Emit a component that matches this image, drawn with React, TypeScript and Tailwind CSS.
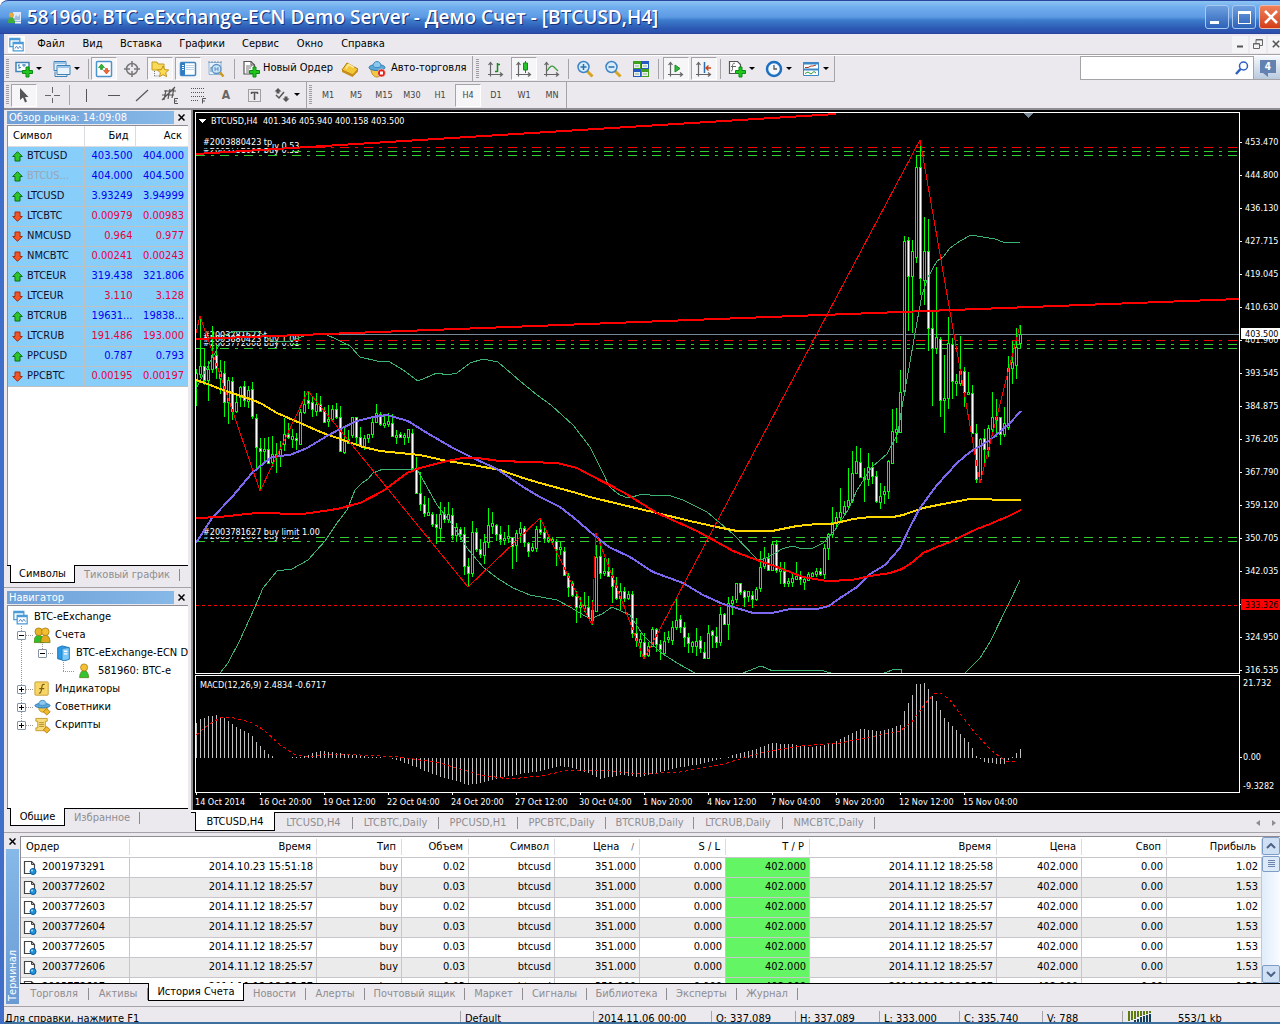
import type { ReactNode } from 'react';

const quotes: Array<{ symbol: string; bid: string; ask: string; up: boolean; muted?: boolean }> = [
  { symbol: 'BTCUSD', bid: '403.500', ask: '404.000', up: true },
  { symbol: 'BTCUS...', bid: '404.000', ask: '404.500', up: true, muted: true },
  { symbol: 'LTCUSD', bid: '3.93249', ask: '3.94999', up: true },
  { symbol: 'LTCBTC', bid: '0.00979', ask: '0.00983', up: false },
  { symbol: 'NMCUSD', bid: '0.964', ask: '0.977', up: false },
  { symbol: 'NMCBTC', bid: '0.00241', ask: '0.00243', up: false },
  { symbol: 'BTCEUR', bid: '319.438', ask: '321.806', up: true },
  { symbol: 'LTCEUR', bid: '3.110', ask: '3.128', up: false },
  { symbol: 'BTCRUB', bid: '19631...', ask: '19838...', up: true },
  { symbol: 'LTCRUB', bid: '191.486', ask: '193.000', up: false },
  { symbol: 'PPCUSD', bid: '0.787', ask: '0.793', up: true },
  { symbol: 'PPCBTC', bid: '0.00195', ask: '0.00197', up: false },
];

const orders = [
  { id: '2001973291', open: '2014.10.23 15:51:18', volume: '0.02', close: '2014.11.12 18:25:58', profit: '1.02' },
  { id: '2003772602', open: '2014.11.12 18:25:57', volume: '0.03', close: '2014.11.12 18:25:57', profit: '1.53' },
  { id: '2003772603', open: '2014.11.12 18:25:57', volume: '0.02', close: '2014.11.12 18:25:57', profit: '1.02' },
  { id: '2003772604', open: '2014.11.12 18:25:57', volume: '0.03', close: '2014.11.12 18:25:57', profit: '1.53' },
  { id: '2003772605', open: '2014.11.12 18:25:57', volume: '0.03', close: '2014.11.12 18:25:57', profit: '1.53' },
  { id: '2003772606', open: '2014.11.12 18:25:57', volume: '0.03', close: '2014.11.12 18:25:57', profit: '1.53' },
  { id: '2003772607', open: '2014.11.12 18:25:57', volume: '0.03', close: '2014.11.12 18:25:57', profit: '1.53' },
];

const orderColumns = [
  { label: 'Ордер', width: 'w-[109px]' },
  { label: 'Время', width: 'w-[187px]' },
  { label: 'Тип', width: 'w-[85px]' },
  { label: 'Объем', width: 'w-[67px]' },
  { label: 'Символ', width: 'w-[86px]' },
  { label: 'Цена', width: 'w-[85px]', sorted: true },
  { label: 'S / L', width: 'w-[86px]' },
  { label: 'T / P', width: 'w-[84px]' },
  { label: 'Время', width: 'w-[187px]' },
  { label: 'Цена', width: 'w-[85px]' },
  { label: 'Своп', width: 'w-[85px]' },
  { label: 'Прибыль', width: 'w-[95px]' },
];

const terminalTabs = [
  { label: 'Торговля', width: 'w-[69px]' },
  { label: 'Активы', width: 'w-[59px]' },
  { label: 'История Счета', width: 'w-[96px]', active: true },
  { label: 'Новости', width: 'w-[62px]' },
  { label: 'Алерты', width: 'w-[59px]' },
  { label: 'Почтовый ящик', width: 'w-[100px]' },
  { label: 'Маркет', width: 'w-[58px]' },
  { label: 'Сигналы', width: 'w-[64px]' },
  { label: 'Библиотека', width: 'w-[80px]' },
  { label: 'Эксперты', width: 'w-[70px]' },
  { label: 'Журнал', width: 'w-[61px]' },
];

const chartTabs = [
  { label: 'BTCUSD,H4', width: 'w-[80px]', active: true },
  { label: 'LTCUSD,H4', width: 'w-[78px]' },
  { label: 'LTCBTC,Daily', width: 'w-[86px]' },
  { label: 'PPCUSD,H1', width: 'w-[79px]' },
  { label: 'PPCBTC,Daily', width: 'w-[88px]' },
  { label: 'BTCRUB,Daily', width: 'w-[88px]' },
  { label: 'LTCRUB,Daily', width: 'w-[89px]' },
  { label: 'NMCBTC,Daily', width: 'w-[92px]' },
];

const timeframes = ['M1', 'M5', 'M15', 'M30', 'H1', 'H4', 'D1', 'W1', 'MN'];

const menu = [
  { label: 'Файл', width: 'w-[38px]' },
  { label: 'Вид', width: 'w-[45px]' },
  { label: 'Вставка', width: 'w-[52px]' },
  { label: 'Графики', width: 'w-[70px]' },
  { label: 'Сервис', width: 'w-[47px]' },
  { label: 'Окно', width: 'w-[52px]' },
  { label: 'Справка', width: 'w-[54px]' },
];

// high, body top, body bottom, low, 1 = falling; one candle every 4px
const candles: number[][] = [
  [369, 373, 380, 406], [316, 366, 374, 378], [348, 366, 380, 385, 1], [361, 369, 380, 401], [326, 355, 369, 373],
  [345, 355, 368, 379, 1], [360, 371, 378, 394], [361, 373, 402, 417, 1], [377, 380, 402, 424], [377, 381, 411, 420, 1],
  [394, 402, 411, 413], [386, 387, 397, 407], [381, 386, 400, 407, 1], [386, 390, 401, 408], [382, 389, 416, 419, 1],
  [414, 418, 447, 468, 1], [438, 448, 451, 491, 1], [438, 449, 451, 462], [437, 449, 463, 463, 1], [436, 454, 462, 467],
  [443, 454, 456, 473], [441, 449, 456, 467], [418, 434, 444, 451], [423, 434, 437, 439, 1], [429, 436, 439, 448],
  [433, 438, 440, 450, 1], [409, 412, 444, 444], [391, 404, 412, 414], [392, 400, 403, 409, 1], [397, 402, 409, 417, 1],
  [393, 404, 411, 416], [396, 404, 411, 412, 1], [407, 411, 422, 422, 1], [405, 419, 421, 427], [405, 409, 419, 420],
  [403, 409, 417, 419, 1], [406, 417, 451, 452, 1], [427, 441, 452, 454], [430, 439, 443, 443], [417, 417, 435, 438],
  [417, 417, 437, 445, 1], [427, 437, 445, 447, 1], [435, 438, 446, 450], [434, 434, 438, 443], [417, 422, 434, 438],
  [404, 413, 422, 423], [412, 414, 424, 426, 1], [416, 423, 425, 428], [413, 421, 424, 427], [414, 423, 436, 437, 1],
  [430, 435, 437, 444], [432, 434, 437, 437, 1], [433, 435, 437, 445], [429, 429, 437, 443], [429, 433, 468, 469, 1],
  [457, 468, 493, 494, 1], [472, 493, 504, 511, 1], [496, 504, 513, 517, 1], [498, 512, 515, 516], [512, 514, 524, 527, 1],
  [514, 524, 527, 544, 1], [502, 514, 528, 541], [507, 514, 519, 523, 1], [502, 514, 519, 523], [508, 515, 535, 540, 1],
  [523, 527, 535, 542], [527, 529, 534, 540, 1], [527, 534, 566, 575, 1], [558, 566, 573, 587, 1], [521, 532, 573, 577],
  [528, 532, 549, 552, 1], [539, 549, 554, 558, 1], [534, 542, 555, 564], [508, 525, 542, 548], [512, 523, 526, 534],
  [524, 525, 534, 541, 1], [526, 534, 539, 545, 1], [532, 538, 540, 545], [525, 536, 538, 543], [537, 537, 546, 569, 1],
  [530, 533, 545, 562], [522, 528, 533, 543], [526, 528, 542, 547, 1], [542, 543, 551, 557, 1], [543, 547, 550, 552],
  [526, 529, 548, 552], [518, 529, 532, 535, 1], [528, 532, 538, 543, 1], [535, 538, 540, 543], [537, 539, 541, 544],
  [539, 541, 549, 566, 1], [542, 547, 549, 555], [547, 551, 575, 576, 1], [573, 576, 587, 597, 1], [581, 583, 595, 597, 1],
  [591, 596, 607, 623, 1], [597, 605, 607, 618], [592, 605, 608, 612], [596, 607, 617, 618, 1], [600, 610, 620, 625],
  [545, 557, 611, 612], [540, 556, 573, 579, 1], [558, 571, 573, 576], [558, 571, 576, 577, 1], [568, 576, 586, 603, 1],
  [577, 586, 598, 600, 1], [583, 591, 598, 611], [587, 591, 598, 602, 1], [591, 594, 598, 600], [591, 594, 633, 638, 1],
  [618, 633, 640, 647, 1], [633, 639, 642, 657], [633, 642, 655, 659, 1], [642, 646, 655, 657], [627, 629, 646, 646],
  [628, 629, 644, 652, 1], [640, 644, 649, 660, 1], [632, 641, 653, 653], [631, 637, 639, 643], [621, 627, 640, 645],
  [598, 620, 627, 630], [615, 619, 627, 633, 1], [622, 627, 637, 647, 1], [633, 637, 643, 653, 1], [641, 642, 646, 653],
  [628, 641, 646, 656], [636, 640, 648, 653, 1], [642, 652, 658, 659, 1], [625, 633, 658, 659], [630, 631, 635, 648, 1],
  [627, 636, 642, 648, 1], [607, 614, 642, 646], [613, 614, 624, 624, 1], [597, 603, 624, 640], [596, 600, 603, 615],
  [583, 583, 599, 603], [583, 583, 592, 595, 1], [590, 591, 597, 607, 1], [591, 591, 596, 602], [591, 595, 599, 608, 1],
  [587, 589, 599, 601], [551, 567, 588, 592], [547, 558, 566, 569], [553, 558, 570, 571, 1], [541, 544, 570, 571],
  [540, 544, 570, 573, 1], [562, 569, 571, 584], [562, 571, 583, 587, 1], [578, 581, 583, 587], [572, 578, 582, 587],
  [562, 576, 579, 580], [571, 576, 579, 585, 1], [577, 579, 582, 590], [572, 574, 580, 581], [572, 573, 576, 577],
  [568, 571, 574, 577], [568, 571, 574, 576, 1], [544, 548, 574, 579], [533, 534, 548, 560], [507, 522, 534, 538],
  [512, 517, 523, 529], [488, 512, 517, 523], [501, 506, 513, 514], [468, 500, 506, 510], [451, 473, 500, 503],
  [446, 461, 473, 474], [448, 462, 477, 477, 1], [468, 477, 479, 502], [453, 467, 479, 486], [462, 467, 476, 484, 1],
  [471, 476, 501, 503, 1], [483, 496, 502, 509], [486, 491, 494, 504], [460, 461, 491, 499], [409, 431, 463, 463],
  [408, 429, 432, 443], [370, 392, 432, 433], [236, 241, 391, 392], [237, 240, 276, 331, 1], [240, 251, 276, 333],
  [155, 167, 257, 263], [141, 167, 278, 295, 1], [217, 251, 280, 305], [219, 251, 328, 351, 1], [310, 328, 348, 406, 1],
  [267, 337, 348, 354], [337, 339, 400, 417, 1], [355, 398, 400, 433], [317, 343, 398, 409], [338, 344, 381, 399, 1],
  [374, 381, 383, 396], [336, 371, 383, 386], [367, 371, 392, 407, 1], [372, 392, 394, 394], [385, 393, 433, 433, 1],
  [424, 433, 479, 483, 1], [438, 439, 479, 482], [429, 438, 449, 465, 1], [425, 428, 449, 457], [392, 417, 429, 435],
  [399, 417, 420, 437], [417, 417, 434, 445, 1], [407, 423, 434, 437], [356, 368, 427, 430], [341, 362, 368, 384],
  [328, 347, 365, 379], [325, 334, 343, 348],
];

const upperBand = '196,389 212,358 225,335 235,331 257,331 273,341 290,341 307,335 325,334 338,340 350,346 360,357 377,361 390,362 403,370 418,381 437,373 448,375 457,373 470,363 483,359 498,362 520,381 537,395 551,405 573,425 590,447 603,473 609,486 612,489 620,495 628,498 643,494 657,496 668,495 683,500 707,512 733,534 757,559 762,560 772,555 782,549 792,546 803,549 813,548 823,543 835,530 848,510 857,490 872,467 887,454 898,433 902,407 910,362 917,322 922,295 928,277 937,261 943,257 950,248 960,241 971,235 983,237 995,239 1003,242 1020,242';
const lowerBands = [
  '220,673 228,663 240,640 255,607 263,588 277,571 292,569 308,560 325,541 337,523 347,510 355,490 362,483 368,479 373,473 383,469 400,470 417,469 437,505 453,525 467,548 483,567 497,578 513,588 530,595 557,600 570,607 590,619 602,614 612,607 630,615 643,635 660,652 677,663 695,673',
  '743,673 761,666 773,671 793,670 820,670 831,673',
  '884,673 895,669 901,669 902,673',
  '965,673 980,658 990,642 1009,603 1020,580',
];
const slowAverage = '196,380 205,383 223,390 253,400 262,404 277,413 300,423 323,433 343,440 363,447 380,451 420,455 447,461 473,465 500,470 523,478 540,483 573,492 590,497 623,505 657,513 690,521 717,527 737,531 772,531 797,526 817,524 832,524 853,519 870,517 893,517 903,515 923,508 943,504 970,499 987,499 997,500 1021,500';
const fastAverage = '196,543 212,518 232,497 252,473 270,458 278,456 290,455 307,448 327,436 340,429 357,421 373,417 387,415 408,421 427,433 453,448 473,458 497,469 523,487 540,497 560,507 573,517 595,536 609,547 630,557 653,572 683,583 703,595 723,604 740,609 753,613 772,613 790,609 817,609 829,606 840,598 857,587 870,574 885,565 900,548 910,527 920,508 937,485 957,463 970,452 990,440 1009,424 1021,411';
const redAverage = '196,518 220,517 237,515 257,513 303,514 337,509 360,503 383,491 407,473 420,468 447,461 463,458 477,458 500,461 557,463 577,468 590,475 623,492 657,513 697,531 717,542 733,551 757,560 777,567 803,577 827,581 852,580 870,576 890,573 902,569 913,562 923,553 937,547 950,542 960,537 977,529 990,524 1009,516 1021,510';
const zigzag = '196,333 200,316 260,491 308,391 468,587 540,518 592,625 596,533 644,659 920,140 980,483 1020,325';

const histogramKeys = [
  [196, 723], [200, 719], [208, 716], [216, 715], [224, 718], [232, 724], [240, 729], [248, 733], [252, 736], [256, 742], [264, 750],
  [268, 754], [276, 758], [300, 757], [320, 751], [340, 753], [360, 756], [388, 758], [400, 761], [420, 769], [440, 777], [460, 782],
  [468, 785], [480, 783], [500, 778], [520, 774], [540, 771], [560, 766], [572, 768], [590, 774], [600, 779], [620, 775],
  [640, 777], [650, 774], [670, 769], [700, 764], [720, 759], [740, 753], [756, 749], [770, 743], [790, 744], [810, 747],
  [830, 744], [845, 736], [860, 729], [880, 731], [888, 729], [900, 725], [904, 711], [908, 703], [912, 695], [916, 684],
  [924, 683], [928, 689], [932, 696], [936, 701], [940, 710], [944, 718], [952, 726], [964, 738], [968, 742], [972, 748],
  [976, 756], [984, 762], [1000, 764], [1004, 764], [1008, 760], [1012, 757], [1016, 753], [1020, 749],
];
const signal = '196,735 208,725 220,718 230,717 250,722 264,730 280,745 294,754 310,757 330,754 360,755 400,757 440,763 480,775 510,779 540,776 570,770 600,770 640,774 680,772 720,765 760,753 800,746 840,743 870,737 900,731 912,722 924,705 934,694 941,693 950,700 961,715 975,733 992,751 1003,759 1008,762 1018,761';

const prices = ['453.470', '444.800', '436.130', '427.715', '419.045', '410.630', '401.960', '393.545', '384.875', '376.205', '367.790', '359.120', '350.705', '342.035', '', '324.950', '316.535'];
const dates = ['14 Oct 2014', '16 Oct 20:00', '19 Oct 12:00', '22 Oct 04:00', '24 Oct 20:00', '27 Oct 12:00', '30 Oct 04:00', '1 Nov 20:00', '4 Nov 12:00', '7 Nov 04:00', '9 Nov 20:00', '12 Nov 12:00', '15 Nov 04:00'];

function histogramAt(x: number) {
  const i = Math.max(1, histogramKeys.findIndex(([kx]) => kx >= x));
  const [x0, y0] = histogramKeys[i - 1];
  const [x1, y1] = histogramKeys[i];
  return Math.round(y0 + ((y1 - y0) * (x - x0)) / (x1 - x0));
}

function Icon({ children, size = 18 }: { children: ReactNode; size?: number }) {
  return (
    <svg width={size} height={size} viewBox="0 0 18 18" fill="none" className="shrink-0" aria-hidden>
      {children}
    </svg>
  );
}

const plus = <path d="M11 7h3v3.500h3.500v3h-3.500v3.500h-3v-3.500h-3.500v-3h3.500z" fill="#22c51d" stroke="#0b8a12" />;
const axes = <path d="M3.500 2.500v14M1 14.500h14M1.500 5l2-2.500 2 2.500M13 12.500l2.500 2-2.500 2" stroke="#666" strokeWidth="1.200" />;

const icons = {
  newChart: (
    <Icon>
      <path d="M1 2.500h13v9H1z" fill="#fff" stroke="#3d82b8" strokeWidth="1.500" />
      <path d="M4 4v5M3 5.500h1M4 7.500h2M7 5h4M9 4v3" stroke="#3d82b8" />
      {plus}
    </Icon>
  ),
  profiles: (
    <Icon>
      <path d="M1 1.500h12v9H1z" fill="#e3effa" stroke="#3d82b8" />
      <path d="M4 5.500h13v9H4z" fill="#e9f3fc" stroke="#3d82b8" />
      <path d="M1.500 3h11M4.500 7h12" stroke="#9cc4e6" strokeWidth="2" />
      <path d="M2 11.500v5h12v-2" stroke="#3d82b8" />
    </Icon>
  ),
  market: (
    <Icon>
      <rect x="1.500" y="1.500" width="15" height="15" rx="1" fill="#fff" stroke="#4b93cc" strokeWidth="1.500" />
      <path d="M6.500 4l3 3.500h-2v2h-2v-2h-2z" fill="#2fb72a" stroke="#138a13" strokeWidth=".6" />
      <path d="M11.500 14l3-3.500h-2v-2h-2v2h-2z" fill="#f0693a" stroke="#c43a12" strokeWidth=".6" />
    </Icon>
  ),
  target: (
    <Icon>
      <circle cx="9" cy="9" r="5.500" stroke="#777" strokeWidth="1.500" />
      <path d="M9 1v6M9 11v6M1 9h6M11 9h6" stroke="#777" strokeWidth="1.500" />
    </Icon>
  ),
  navigator: (
    <Icon>
      <path d="M1 2h5l1 2h6v6H1z" fill="#f8d95a" stroke="#c49a1c" />
      <path d="M3.500 11v6M3.500 16h5" stroke="#777" strokeDasharray="1 1" />
      <path d="M12 6l1.700 3.600 4 .4-3 2.700.9 4-3.600-2.100-3.500 2.100.9-4-3-2.700 4-.4z" fill="#fbdc4e" stroke="#c4921c" />
    </Icon>
  ),
  terminal: (
    <Icon>
      <rect x="1.500" y="2.500" width="15" height="13" rx="1" fill="#fff" stroke="#3f88c8" strokeWidth="1.500" />
      <path d="M2 3h4v12H2z" fill="#2f7cc4" />
      <path d="M7 5.500h8M7 7.500h8M7 9.500h8" stroke="#bcd3ea" />
      <path d="M3 5.500h2M3 7.500h2M3 9.500h2" stroke="#fff" />
    </Icon>
  ),
  tester: (
    <Icon>
      <path d="M2 2.500h12v12H2z" fill="#e6f1fb" stroke="#8fb4d6" />
      <path d="M2 1v2M5 1v2M8 1v2M11 1v2M14 1v2M4 12V7l2 2 2-4" stroke="#7793ad" />
      <circle cx="9.500" cy="9" r="4.500" fill="#cfe6fa" stroke="#5d92c4" strokeWidth="1.300" />
      <path d="M8 7v4M11 7v4M8 9h3" stroke="#5d92c4" />
      <path d="M13 12.500l3.500 4" stroke="#c99a1c" strokeWidth="2.500" />
    </Icon>
  ),
  newOrder: (
    <Icon>
      <path d="M2 1.500h7l3.500 3.500v9H2z" fill="#fff" stroke="#555" strokeWidth="1.200" />
      <path d="M9 1.500V5h3.500" stroke="#555" />
      <path d="M4 6h6M4 8h5M4 10h3M4 12h3" stroke="#777" />
      {plus}
    </Icon>
  ),
  gold: (
    <Icon>
      <path d="M1 10l5-7 11 6-5 6z" fill="#f4c736" stroke="#b07a12" />
      <path d="M1 10l10.500 5L17 9v2.500L11.500 17 1 12z" fill="#c98d1a" />
      <path d="M5 8.500l2.500-4L13 7.500" stroke="#fdeaa0" strokeWidth="1.500" />
    </Icon>
  ),
  expert: (
    <Icon>
      <path d="M3 9c0 5 3 8 6 8s6-3 6-8z" fill="#f2c744" stroke="#c4921c" />
      <ellipse cx="9" cy="7.500" rx="8" ry="3" fill="#5ca9dc" stroke="#3179ae" />
      <path d="M5 6.500c0-3 1.500-5 4-5s4 2 4 5c-2 1.500-6 1.500-8 0z" fill="#8bc8ee" stroke="#3f8cc2" />
      <circle cx="13.500" cy="13" r="4" fill="#e2231a" stroke="#fff" strokeWidth=".5" />
      <path d="M12 11.500h3v3h-3z" fill="#fff" />
    </Icon>
  ),
  bars: (
    <Icon>
      {axes}
      <path d="M10.500 3v9M8 11.500h2.500M10.500 4.500H13" stroke="#178a1c" strokeWidth="1.500" />
    </Icon>
  ),
  candle: (
    <Icon>
      {axes}
      <path d="M10.500 1v12" stroke="#178a1c" />
      <path d="M8.500 3h4v7h-4z" fill="#25c52a" stroke="#178a1c" />
    </Icon>
  ),
  line: (
    <Icon>
      {axes}
      <path d="M4 11c3-5 5-6 7-4s3 3 4 4" stroke="#3f9c42" strokeWidth="1.300" />
    </Icon>
  ),
  zoomIn: (
    <Icon>
      <path d="M11 11l5.500 5.500" stroke="#d9a520" strokeWidth="3" />
      <circle cx="7.500" cy="7" r="5.500" fill="#d9ecfb" stroke="#3b85c6" strokeWidth="1.500" />
      <path d="M4.500 7h6M7.500 4v6" stroke="#2b6fae" strokeWidth="1.500" />
    </Icon>
  ),
  zoomOut: (
    <Icon>
      <path d="M11 11l5.500 5.500" stroke="#d9a520" strokeWidth="3" />
      <circle cx="7.500" cy="7" r="5.500" fill="#d9ecfb" stroke="#3b85c6" strokeWidth="1.500" />
      <path d="M4.500 7h6" stroke="#2b6fae" strokeWidth="1.500" />
    </Icon>
  ),
  tiles: (
    <Icon>
      <path d="M1 1h8v8H1zM9 9h8v8H9z" fill="#3f9e1c" />
      <path d="M9 1h8v8H9zM1 9h8v8H1z" fill="#2558c4" />
      <path d="M2 4h6v4H2zM10 4h6v4h-6zM2 12h6v4H2zM10 12h6v4h-6z" fill="#e9f2ea" />
      <path d="M3 6h4M11 6h4M3 14h4M11 14h4" stroke="#8fae9a" />
    </Icon>
  ),
  scroll: (
    <Icon>
      {axes}
      <path d="M8 5l5 3.500L8 12z" fill="#35b93a" stroke="#178a1c" />
    </Icon>
  ),
  shift: (
    <Icon>
      {axes}
      <path d="M9.500 2v11" stroke="#2a6fb0" strokeWidth="1.500" />
      <path d="M11 8h5M13.500 5.500L11 8l2.500 2.500" stroke="#c8401a" strokeWidth="1.300" />
    </Icon>
  ),
  indicators: (
    <Icon>
      <path d="M1.500 1.500h8l3 3v9h-11z" fill="#fff" stroke="#555" strokeWidth="1.200" />
      <path d="M7 3.500c-2-1-2.500 1-2.500 3.500s0 4-1.500 4M3 6.500h5" stroke="#666" />
      {plus}
    </Icon>
  ),
  clock: (
    <Icon>
      <circle cx="9" cy="9" r="7" fill="#f2f8fe" stroke="#1f6fc0" strokeWidth="2.500" />
      <path d="M9 5v4h3" stroke="#555" strokeWidth="1.300" />
    </Icon>
  ),
  template: (
    <Icon>
      <path d="M1.500 2.500h15v13h-15z" fill="#fff" stroke="#3f88c8" />
      <path d="M1 3.500h16M1 9.500h16" stroke="#3f88c8" strokeWidth="2" />
      <path d="M3 7.500h3l3-1.500h2l3-1" stroke="#a33c22" />
      <path d="M3 13.500l3-1.500 3 2 3-2.500 2 1.500" stroke="#2f9a33" />
    </Icon>
  ),
  cursor: (
    <Icon>
      <path d="M5 2v12l3-2.500 2 5 2-1-2-4.500h3.500z" fill="#555" />
    </Icon>
  ),
  cross: (
    <Icon>
      <path d="M9.500 1v6M9.500 12v5M2 9.500h6M11 9.500h6" stroke="#666" />
    </Icon>
  ),
  vertical: (
    <Icon>
      <path d="M9.500 3v13" stroke="#555" />
    </Icon>
  ),
  horizontal: (
    <Icon>
      <path d="M3 9.500h12" stroke="#555" />
    </Icon>
  ),
  trend: (
    <Icon>
      <path d="M3 15L15 4" stroke="#555" strokeWidth="1.200" />
    </Icon>
  ),
  channel: (
    <Icon>
      <path d="M1 14L14 1M1 9h12M3 5h12M5 4L3 14M9 3L7 13M13 2l-2 10" stroke="#555" strokeWidth="1.200" />
      <path d="M17 12.500h-3.500v5H17M13.500 15H16" stroke="#555" />
    </Icon>
  ),
  fibo: (
    <Icon>
      <path d="M2 2.500h13M2 6.500h13M2 10.500h13M2 14.500h8" stroke="#555" strokeDasharray="1 1" />
      <path d="M17 12.500h-3.500v5M13.500 15H16" stroke="#555" />
    </Icon>
  ),
  label: (
    <Icon>
      <rect x="3.500" y="3.500" width="12" height="12" stroke="#555" strokeDasharray="1 1" />
      <path d="M6 6.500h7M9.500 6v8M6.500 6v2M12.500 6v2" stroke="#555" strokeWidth="1.500" />
    </Icon>
  ),
  arrows: (
    <Icon>
      <path d="M5 2l3.500 3.500H6.500v2h-3v-2h-2z" fill="#555" />
      <path d="M3 9l3 3 5-6" stroke="#555" strokeWidth="1.500" />
      <path d="M13 16l-3.500-3.500h2v-2h3v2h2z" fill="#555" />
    </Icon>
  ),
  chart: (
    <Icon size={15}>
      <path d="M1 1.500h12v10H1z" fill="#f4faff" stroke="#4a9bd8" strokeWidth="1.500" />
      <path d="M5 6.500h12v10H5z" fill="#fff" stroke="#4a9bd8" strokeWidth="1.500" />
      <path d="M1 3h12M5 8h12" stroke="#4a9bd8" strokeWidth="1.500" />
      <path d="M7 14l2-3 2 3 2-3 2 3" stroke="#3c79c8" />
    </Icon>
  ),
};

const person = (x: number, head: string, body: string) => (
  <g>
    <path d={`M${x} 16.500c0-5 2-8 5-8s5 3 5 8z`} fill={body} stroke="#5a7a10" strokeWidth=".8" />
    <circle cx={x + 5} cy="5" r="4" fill={head} stroke="#a8740a" strokeWidth=".8" />
  </g>
);

function Dropdown() {
  return (
    <svg width="6" height="4" viewBox="0 0 6 4" aria-hidden>
      <path d="M0 0h6L3 3z" fill="#000" />
    </svg>
  );
}

function Grip({ width = 'w-2' }: { width?: string }) {
  return (
    <div className={`flex shrink-0 items-center justify-center self-stretch ${width}`}>
      <div className="h-5 w-[3px] bg-[repeating-linear-gradient(#9d9ba0_0px,#9d9ba0_1px,#ebe9ed_1px,#ebe9ed_2px)]" />
    </div>
  );
}

function Separator({ width }: { width: string }) {
  return (
    <div className={`flex shrink-0 justify-center ${width}`}>
      <div className="h-5 w-px bg-[#a5a3a8]" />
    </div>
  );
}

function Tool({ label, pressed, children }: { label: string; pressed?: boolean; children: ReactNode }) {
  return (
    <button
      aria-label={label}
      className={`mx-px flex h-[23px] w-[26px] shrink-0 items-center justify-center border ${pressed ? 'border-t-[#a5a3a8] border-l-[#a5a3a8] border-r-white border-b-white bg-[#f6f5f7]' : 'border-transparent'}`}
    >
      {children}
    </button>
  );
}

function MenuTool({ label, width, children }: { label: string; width: string; children: ReactNode }) {
  return (
    <button aria-label={label} className={`flex h-6 shrink-0 items-center gap-[3px] pl-[5px] ${width}`}>
      {children}
      <Dropdown />
    </button>
  );
}

function TitleBar() {
  return (
    <header className="flex h-[34px] shrink-0 items-center overflow-hidden rounded-tl-lg border-t border-b border-[#2a45a0] bg-[linear-gradient(#8cc4f2_0%,#6fadee_20%,#5d9ae4_50%,#3c7ccc_60%,#2c5ab4_85%,#2a4fac_100%)] pl-2">
      <svg width="13" height="13" viewBox="0 0 13 13" aria-hidden>
        <path d="M5 1h8v9H5z" fill="#dceafa" />
        <path d="M6 8l2-4 2 2 2-3v6H6z" fill="#9dbbe0" />
        <path d="M0 12c0-4 1-6 3-6s4 2 4 6z" fill="#3fae38" />
        <circle cx="3.500" cy="4" r="2.500" fill="#e8a840" />
        <path d="M7 10.500h6v2H7z" fill="#f4f8fc" />
      </svg>
      <h1 className="ml-[6px] flex-1 truncate font-['Open_Sans','Noto_Sans',sans-serif] text-[19px] leading-[30px] font-semibold text-white [text-shadow:1px_1px_0_#1b2f78]">
        581960: BTC-eExchange-ECN Demo Server - Демо Счет - [BTCUSD,H4]
      </h1>
      <div className="-mr-[3px] flex shrink-0 gap-[3px]">
        <button aria-label="Свернуть" className="flex size-6 items-end rounded-[3px] border border-[#a9c9f0] bg-linear-to-b from-[#6ea0e0] to-[#2d62b8] pb-[4px] pl-[4px]">
          <span className="h-[3px] w-[9px] bg-white" />
        </button>
        <button aria-label="Развернуть" className="flex size-6 items-center justify-center rounded-[3px] border border-[#a9c9f0] bg-linear-to-b from-[#6ea0e0] to-[#2d62b8]">
          <span className="size-[13px] border border-t-[3px] border-white" />
        </button>
        <button aria-label="Закрыть" className="flex size-6 items-center justify-center rounded-[3px] border border-[#f0b8a8] bg-linear-to-b from-[#ee8058] to-[#d43c14]">
          <svg width="16" height="16" viewBox="0 0 16 16" aria-hidden>
            <path d="M2 2l12 12M14 2L2 14" stroke="#fff" strokeWidth="2.500" />
          </svg>
        </button>
      </div>
    </header>
  );
}

function MenuBar() {
  return (
    <nav className="flex h-[21px] shrink-0 items-center border-b border-[#a5a3a8] pl-1 text-[11px]">
      <span className="mr-[7px] flex w-[17px] justify-center bg-white py-px">{icons.chart}</span>
      <div className="flex flex-1">
        {menu.map((m) => (
          <button key={m.label} className={`${m.width} shrink-0 text-center whitespace-nowrap`}>{m.label}</button>
        ))}
      </div>
      <div className="-mr-1 flex shrink-0 gap-[2px]">
        <button aria-label="Свернуть окно" className="flex h-[17px] w-4 items-center justify-center bg-[#f4f3f6]">
          <svg width="10" height="10" viewBox="0 0 10 10"><path d="M2 7.500h6" stroke="#555" strokeWidth="2" /></svg>
        </button>
        <button aria-label="Восстановить окно" className="flex h-[17px] w-4 items-center justify-center bg-[#f4f3f6]">
          <svg width="10" height="10" viewBox="0 0 10 10" fill="none"><path d="M.5 4.500h6v5h-6zM3 4V.5h6.500v6H7M3 1h6.500M.5 5h6" stroke="#666" /></svg>
        </button>
        <button aria-label="Закрыть окно" className="flex h-[17px] w-4 items-center justify-center bg-[#f4f3f6]">
          <svg width="8" height="8" viewBox="0 0 10 10"><path d="M1 1l8 8M9 1L1 9" stroke="#555" strokeWidth="2" /></svg>
        </button>
      </div>
    </nav>
  );
}

function Toolbars() {
  return (
    <div className="shrink-0 border-b-2 border-[#8f8d92] text-[11px]">
      <div className="flex h-[27px] border-t border-white">
        <div className="flex shrink-0 items-center border-r border-b border-[#a5a3a8]">
          <Grip width="w-[6px]" />
          <MenuTool label="Новый график" width="w-[38px]">{icons.newChart}</MenuTool>
          <MenuTool label="Профили" width="w-[38px]">{icons.profiles}</MenuTool>
          <Separator width="w-[4px]" />
          <Tool label="Обзор рынка" pressed>{icons.market}</Tool>
          <Tool label="Окно данных">{icons.target}</Tool>
          <Tool label="Навигатор" pressed>{icons.navigator}</Tool>
          <Tool label="Терминал" pressed>{icons.terminal}</Tool>
          <Tool label="Тестер">{icons.tester}</Tool>
          <Separator width="w-[8px]" />
          <button className="flex h-6 w-[98px] shrink-0 items-center gap-[3px] pl-1 whitespace-nowrap">{icons.newOrder}Новый Ордер</button>
          <Tool label="MetaEditor">{icons.gold}</Tool>
          <button className="flex h-6 w-[108px] shrink-0 items-center gap-[5px] pl-1 whitespace-nowrap">{icons.expert}Авто-торговля</button>
        </div>
        <div className="flex shrink-0 items-center border-r border-b border-[#a5a3a8]">
          <Grip width="w-[9px]" />
          <Tool label="Бары">{icons.bars}</Tool>
          <Tool label="Свечи" pressed>{icons.candle}</Tool>
          <Tool label="Линия">{icons.line}</Tool>
          <Separator width="w-[5px]" />
          <Tool label="Увеличить">{icons.zoomIn}</Tool>
          <Tool label="Уменьшить">{icons.zoomOut}</Tool>
          <Tool label="Окна мозаикой">{icons.tiles}</Tool>
          <Separator width="w-[7px]" />
          <Tool label="Автопрокрутка" pressed>{icons.scroll}</Tool>
          <Tool label="Сдвиг графика" pressed>{icons.shift}</Tool>
          <Separator width="w-[5px]" />
          <MenuTool label="Индикаторы" width="w-[37px]">{icons.indicators}</MenuTool>
          <MenuTool label="Периоды" width="w-[37px]">{icons.clock}</MenuTool>
          <MenuTool label="Шаблоны" width="w-[37px]">{icons.template}</MenuTool>
        </div>
        <div className="flex flex-1 items-start justify-end">
          <label className="flex h-6 w-[174px] items-center border border-[#a5a3a8] bg-white pr-1">
            <input aria-label="Поиск" className="min-w-0 flex-1 bg-transparent px-1 outline-none" />
            <svg width="14" height="14" viewBox="0 0 14 14" fill="none" aria-hidden>
              <circle cx="8.500" cy="5" r="4" stroke="#2d5fc4" strokeWidth="1.500" />
              <path d="M5.500 8L1 13" stroke="#2d5fc4" strokeWidth="2.500" />
            </svg>
          </label>
          <button aria-label="Сообщения" className="relative flex h-6 w-[26px] items-center justify-end border-b border-[#a5a3a8] bg-linear-to-b from-[#f5f8fc] to-[#b9cade] pr-1">
            <span className="mb-[2px] flex h-[13px] w-4 items-center justify-center bg-[#6382b0] text-[10px] leading-3 font-bold text-white">4</span>
            <svg className="absolute right-[12px] bottom-[2px]" width="5" height="4" viewBox="0 0 5 4" aria-hidden><path d="M0 0h5v4z" fill="#6382b0" /></svg>
          </button>
        </div>
      </div>
      <div className="flex h-[26px]">
        <div className="flex shrink-0 items-center border-r border-[#a5a3a8]">
          <Grip width="w-[6px]" />
          <Tool label="Курсор" pressed>{icons.cursor}</Tool>
          <Tool label="Перекрестие">{icons.cross}</Tool>
          <Separator width="w-[6px]" />
          <Tool label="Вертикальная линия">{icons.vertical}</Tool>
          <Tool label="Горизонтальная линия">{icons.horizontal}</Tool>
          <Tool label="Трендовая линия">{icons.trend}</Tool>
          <Tool label="Канал">{icons.channel}</Tool>
          <Tool label="Фибоначчи">{icons.fibo}</Tool>
          <Tool label="Текст"><span className="text-[12px] font-bold text-[#666]">A</span></Tool>
          <Tool label="Метка">{icons.label}</Tool>
          <MenuTool label="Стрелки" width="w-[38px]">{icons.arrows}</MenuTool>
        </div>
        <div className="flex shrink-0 items-center border-r border-[#a5a3a8]">
          <Grip width="w-[7px]" />
          {timeframes.map((t) => (
            <Tool key={t} label={t} pressed={t === 'H4'}>
              <span className="pt-[2px] text-[9px] text-[#444]">{t}</span>
            </Tool>
          ))}
        </div>
      </div>
    </div>
  );
}

function PanelTitle({ children }: { children: ReactNode }) {
  return (
    <div className="flex h-[15px] shrink-0 items-center text-[11px]">
      <h2 className="h-[13px] flex-1 bg-linear-to-r from-[#6fa0d8] to-[#86b8e8] pl-[2px] leading-[13px] text-white">{children}</h2>
      <button aria-label="Закрыть" className="flex w-[14px] justify-center">
        <svg width="7" height="7" viewBox="0 0 7 7"><path d="M.5.5l6 6M6.500.5l-6 6" stroke="#000" strokeWidth="1.500" /></svg>
      </button>
    </div>
  );
}

function PanelTabs({ active, other, activeWidth, otherWidth }: { active: string; other: string; activeWidth: string; otherWidth: string }) {
  return (
    <div className="flex h-[22px] shrink-0 text-[11px]">
      <span className="w-[3px] border-t border-black" />
      <button className={`${activeWidth} h-[18px] border border-t-0 border-black bg-white leading-[17px]`}>{active}</button>
      <div className="flex-1 border-t border-black">
        <button className={`${otherWidth} mt-[3px] h-3 border-r border-[#8c8a90] text-center leading-3 text-[#8f8d92]`}>{other}</button>
      </div>
    </div>
  );
}

function MarketWatch() {
  return (
    <section className="flex h-[478px] shrink-0 flex-col border-b border-[#a5a3a8] pr-[3px] pl-[3px]">
      <PanelTitle>Обзор рынка: 14:09:08</PanelTitle>
      <div className="flex-1 border-t border-l border-[#8f8d92] bg-white">
        <table className="w-full table-fixed border-collapse text-[11px]">
          <thead>
            <tr className="h-5 text-left">
              <th className="w-[76px] border-r border-b border-[#dddbe0] p-0 pl-[5px] font-normal">Символ</th>
              <th className="w-[51px] border-r border-b border-[#dddbe0] p-0 pr-[6px] text-right font-normal">Бид</th>
              <th className="border-b border-[#dddbe0] p-0 pr-[6px] text-right font-normal">Аск</th>
            </tr>
          </thead>
          <tbody>
            {quotes.map((q) => (
              <tr key={q.symbol} className={`h-5 bg-[#87cefa] ${q.up ? 'text-[#0000f0]' : 'text-[#e8003c]'}`}>
                <td className="border-r border-b border-[#c0c0c0] p-0 pl-1">
                  <span className="flex items-center gap-1">
                    <svg width="11" height="11" viewBox="0 0 11 11" className={q.up ? '' : 'rotate-180'} aria-hidden>
                      <path d="M5.500.7l4.800 4.800H8V10H3V5.500H.7z" fill={q.up ? '#2fc62a' : '#f0562a'} stroke={q.up ? '#0a6f10' : '#a82a0a'} />
                    </svg>
                    <span className={q.muted ? 'text-[#9aa6b4]' : 'text-[#101030]'}>{q.symbol}</span>
                  </span>
                </td>
                <td className="border-r border-b border-[#c0c0c0] p-0 pr-[2px] text-right">{q.bid}</td>
                <td className="border-b border-[#c0c0c0] p-0 pr-1 text-right">{q.ask}</td>
              </tr>
            ))}
          </tbody>
        </table>
      </div>
      <PanelTabs active="Символы" other="Тиковый график" activeWidth="w-[65px]" otherWidth="w-[105px]" />
    </section>
  );
}

function TreeRow({ indent, icon, expander, children }: { indent: string; icon: ReactNode; expander?: '+' | '-'; children: ReactNode }) {
  return (
    <li className={`relative flex h-[18px] items-center whitespace-nowrap ${indent}`}>
      {expander && (
        <button aria-label="Развернуть" className="mr-2 flex size-[9px] shrink-0 items-center justify-center rounded-[1px] border border-[#8593a6] bg-white">
          <svg width="5" height="5" viewBox="0 0 5 5"><path d={expander === '+' ? 'M0 2.500h5M2.500 0v5' : 'M0 2.500h5'} stroke="#000" /></svg>
        </button>
      )}
      <span className="mr-1 flex w-[17px] shrink-0">{icon}</span>
      {children}
    </li>
  );
}

function Navigator() {
  return (
    <section className="flex min-h-0 flex-1 flex-col pt-[2px] pr-[3px] pb-[2px] pl-[3px]">
      <PanelTitle>Навигатор</PanelTitle>
      <div className="relative min-h-0 flex-1 overflow-hidden border-t border-l border-[#8f8d92] bg-white">
        <svg className="absolute top-[2px] left-0" width="100" height="130" fill="none" aria-hidden>
          <path d="M13.500 18v101M18 27.500h7M18 81.500h7M18 99.500h7M18 117.500h7M34.500 36v6M38 45.500h8M55.500 54v10M55 63.500h12" stroke="#999" strokeDasharray="1 1" />
        </svg>
        <ul className="pt-[2px] text-[11px]">
          <TreeRow indent="pl-[5px]" icon={icons.chart}>BTC-eExchange</TreeRow>
          <TreeRow
            indent="pl-[9px]"
            expander="-"
            icon={<Icon size={17}>{person(0, '#e8b428', '#2fbf2a')}{person(7, '#f2c030', '#e3a91c')}</Icon>}
          >
            Счета
          </TreeRow>
          <TreeRow
            indent="pl-[30px]"
            expander="-"
            icon={
              <Icon size={16}>
                <path d="M3 3l5-2 8 2v13l-5 1.500-8-2z" fill="#2a9be8" stroke="#1670b4" />
                <path d="M8 4l8-1v13l-5 1.500H8z" fill="#7cc8f8" stroke="#1670b4" strokeWidth=".6" />
                <path d="M10 7h4M10 10h4" stroke="#fff" strokeWidth="1.500" />
              </Icon>
            }
          >
            BTC-eExchange-ECN Demo Server
          </TreeRow>
          <TreeRow indent="pl-[69px]" icon={<Icon size={16}>{person(3, '#f2c030', '#35c42f')}</Icon>}>581960: BTC-e</TreeRow>
          <TreeRow
            indent="pl-[9px]"
            expander="+"
            icon={
              <Icon size={16}>
                <rect x="1" y="1" width="15" height="15" rx="1" fill="#f7d667" stroke="#c49a2c" />
                <path d="M12 4c-3-1-3 1-3.500 5S7 14 5.500 13.500M6 8.500h5.500" stroke="#7a5a10" strokeWidth="1.300" />
              </Icon>
            }
          >
            Индикаторы
          </TreeRow>
          <TreeRow
            indent="pl-[9px]"
            expander="+"
            icon={
              <Icon size={17}>
                <path d="M5 9c0 4 3 5 5 5s4-2 4-5z" fill="#f2c744" stroke="#c4921c" />
                <ellipse cx="9" cy="7" rx="8" ry="2.500" fill="#5ca9dc" stroke="#3179ae" />
                <path d="M5 6c0-3 1.500-4.500 4-4.500s4 1.500 4 4.500c-2 1-6 1-8 0z" fill="#8bc8ee" stroke="#3f8cc2" />
                <path d="M13.500 10l3.500 3.500-3.500 3.500-3.500-3.500z" fill="#f2b92c" stroke="#b07a12" />
              </Icon>
            }
          >
            Советники
          </TreeRow>
          <TreeRow
            indent="pl-[9px]"
            expander="+"
            icon={
              <Icon size={17}>
                <path d="M2 1.500h12v3h-2v7h2v3H2v-3h2v-7H2z" fill="#f7dc7a" stroke="#c49a2c" />
                <path d="M5.500 6h5M5.500 8h5M5.500 10h5" stroke="#b58a2a" />
                <path d="M13.500 10l3.500 3.500-3.500 3.500-3.500-3.500z" fill="#f2b92c" stroke="#b07a12" />
              </Icon>
            }
          >
            Скрипты
          </TreeRow>
        </ul>
      </div>
      <PanelTabs active="Общие" other="Избранное" activeWidth="w-[55px]" otherWidth="w-[75px]" />
    </section>
  );
}

const dashDot = '9 6 3 6';

function PriceChart() {
  return (
    <svg viewBox="193 110 1087 699" preserveAspectRatio="xMinYMin meet" className="h-full w-full bg-black font-['DejaVu_Sans_Condensed','Noto_Sans',sans-serif] text-[9px]" role="img" aria-label="BTCUSD,H4">
      <g fill="#fff">
        <text x="203" y="153">#2003781627 buy 0.53</text>
        <path d="M203 141h98v9h-98z" fill="#000" />
        <text x="203" y="149">#2003772601 buy 0.53</text>
        <path d="M203 136h68v12h-68z" fill="#000" />
        <text x="203" y="145">#2003880423 tp</text>
        <text x="203" y="346">#2003772608 buy 0.01</text>
        <path d="M203 334h98v9h-98z" fill="#000" />
        <text x="203" y="338">#2003781627 t</text>
        <text x="203" y="342">#2003880423 buy 1.00</text>
        <text x="203" y="539">#2003772601 buy 0.53</text>
        <path d="M203 528h118v9H203z" fill="#000" />
        <text x="203" y="535">#2003781627 buy limit 1.00</text>
      </g>
      <g shapeRendering="crispEdges" fill="none">
        <path d="M292 147.500h947M292 340.500h947" stroke="#f00" strokeDasharray={dashDot} />
        <path d="M292 151.500h947M196 155.500h1043M292 344.500h947M196 348.500h1043M316 537.500h923M196 541.500h1043" stroke="#32cd32" strokeDasharray={dashDot} />
        <path d="M196 605.500h1043" stroke="#f00" strokeDasharray="3 3" />
        <path d="M330 334.500h909" stroke="#778899" />

        {candles.map(([high, top, bottom, low, falling], i) => {
          const x = 196 + i * 4;
          return (
            <g key={i}>
              <path d={`M${x + 0.5} ${high}V${low}`} stroke="#0f0" />
              <path d={`M${x - 0.5} ${top + 0.5}h2V${bottom + 0.5}h-2z`} fill={falling ? '#fff' : '#000'} stroke="#0f0" />
            </g>
          );
        })}

        <polyline points={upperBand} stroke="#3cb371" />
        {lowerBands.map((points) => (
          <polyline key={points} points={points} stroke="#3cb371" />
        ))}
        <polyline points={slowAverage} stroke="#ffd700" strokeWidth="2" />
        <polyline points={fastAverage} stroke="#7b68ee" strokeWidth="2" />
        <polyline points={redAverage} stroke="#f00" strokeWidth="2" />
        <polyline points={zigzag} stroke="#f00" />
        <path d="M196 154L836 114M196 339L1239 299" stroke="#f00" strokeWidth="2" />

        {candles.map((_, i) => {
          const x = 196 + i * 4;
          return <path key={i} d={`M${x + 0.5} 757.500V${histogramAt(x)}`} stroke="#c0c0c0" />;
        })}
        <polyline points={signal} stroke="#f00" strokeDasharray="3 3" />

        <path d="M195.500 673.500V112.500H1239.500V673.500zM195.500 792.500V675.500H1239.500V792.500z" stroke="#fff" />
        {prices.map((_, i) => (
          <path key={i} d={`M1240 ${142.5 + i * 33}h2`} stroke="#fff" />
        ))}
        {dates.map((d, i) => (
          <path key={d} d={`M${196.5 + i * 64} 793v2`} stroke="#fff" />
        ))}
        <path d="M1240 757.500h2" stroke="#fff" />
        <path d="M1023 113h10l-5 5z" fill="#778899" />
        <path d="M198 119h8l-4 4z" fill="#fff" />
      </g>

      <g fill="#fff">
        <text x="211" y="124" className="whitespace-pre">BTCUSD,H4  401.346 405.940 400.158 403.500</text>
        <text x="200" y="688">MACD(12,26,9) 2.4834 -0.6717</text>
        {prices.map((p, i) => (
          <text key={i} x="1245" y={145 + i * 33}>{p}</text>
        ))}
        <text x="1243" y="686">21.732</text>
        <text x="1243" y="760">0.00</text>
        <text x="1243" y="789">-9.3282</text>
        {dates.map((d, i) => (
          <text key={d} x={195 + i * 64} y="805">{d}</text>
        ))}
      </g>
      <path d="M1241 328h39v11h-39z" fill="#fff" />
      <text x="1245" y="337" fill="#000">403.500</text>
      <path d="M1241 599h39v11h-39z" fill="#f00" />
      <text x="1245" y="608" fill="#000">333.326</text>
    </svg>
  );
}

function ChartArea() {
  return (
    <main className="flex min-w-0 flex-1 flex-col">
      <div className="min-h-0 flex-1 overflow-hidden border-l-2 border-[#8f8d92] bg-black">
        <PriceChart />
      </div>
      <div className="flex h-[22px] shrink-0 border-t-2 border-white text-[11px]">
        <span className="w-1 border-t border-black" />
        {chartTabs.map((t) =>
          t.active ? (
            <button key={t.label} className={`${t.width} h-[19px] shrink-0 border border-t-0 border-black bg-white leading-[17px]`}>{t.label}</button>
          ) : (
            <div key={t.label} className={`${t.width} shrink-0 border-t border-black pt-[2px]`}>
              <button className="h-3 w-full border-r border-[#8f8d92] text-center leading-3 text-[#8f8d92]">{t.label}</button>
            </div>
          ),
        )}
        <div className="flex flex-1 items-center justify-end gap-3 border-t border-black pr-1">
          <svg width="4" height="6" viewBox="0 0 4 6"><path d="M4 0v6L0 3z" fill="#8f8d92" /></svg>
          <svg width="4" height="6" viewBox="0 0 4 6"><path d="M0 0v6l4-3z" fill="#8f8d92" /></svg>
        </div>
      </div>
    </main>
  );
}

function OrderIcon() {
  return (
    <svg width="14" height="16" viewBox="0 0 14 16" fill="none" className="shrink-0" aria-hidden>
      <path d="M1.500 1.500h7l3 3v9h-10z" fill="#fff" stroke="#444" strokeWidth="1.200" />
      <path d="M8.500 1.500v3h3" stroke="#444" />
      <circle cx="10" cy="11.500" r="3" fill="#1e96dc" stroke="#0c5a9a" />
      <circle cx="9" cy="10.500" r="1" fill="#a9dcf8" />
    </svg>
  );
}

function Terminal() {
  const cell = 'border-r border-b border-[#c8c6cb] p-0 pr-[3px] text-right';
  return (
    <section className="flex h-[174px] shrink-0 border-t border-[#a5a3a8] text-[11px]">
      <div className="flex w-4 shrink-0 flex-col items-center pt-[5px] pb-[2px]">
        <button aria-label="Закрыть">
          <svg width="7" height="7" viewBox="0 0 7 7"><path d="M.5.5l6 6M6.500.5l-6 6" stroke="#000" strokeWidth="1.500" /></svg>
        </button>
        <h2 className="mt-1 ml-px w-[13px] flex-1 rotate-180 bg-linear-to-b from-[#6a9ad4] to-[#86b8e8] pt-[3px] leading-[13px] text-white [writing-mode:vertical-rl]">Терминал</h2>
      </div>
      <div className="flex min-w-0 flex-1 flex-col pt-[3px]">
        <div className="flex h-[147px] border-t border-l border-[#8f8d92] bg-white">
          <div className="h-full min-w-0 flex-1 overflow-hidden">
            <table className="w-full table-fixed border-separate border-spacing-0">
              <thead>
                <tr className="h-[21px]">
                  {orderColumns.map((c, i) => (
                    <th key={i} className={`${c.width} border-b border-[#c8c6cb] p-0 font-normal`}>
                      <span className={`block border-r border-[#dddbe0] ${i === 0 ? 'pl-[5px] text-left' : 'pr-[5px] text-right'}`}>
                        {c.label}
                        {c.sorted && <span className="pl-3 text-[9px] text-[#555]">/</span>}
                      </span>
                    </th>
                  ))}
                </tr>
              </thead>
              <tbody>
                {orders.map((o) => (
                  <tr key={o.id} className="h-5 even:bg-[#ebebeb]">
                    <td className="border-r border-b border-[#c8c6cb] p-0 pl-[2px]">
                      <span className="flex items-center gap-[5px]"><OrderIcon />{o.id}</span>
                    </td>
                    <td className={cell}>{o.open}</td>
                    <td className={cell}>buy</td>
                    <td className={cell}>{o.volume}</td>
                    <td className={cell}>btcusd</td>
                    <td className={cell}>351.000</td>
                    <td className={cell}>0.000</td>
                    <td className={`${cell} bg-[#64f564]`}>402.000</td>
                    <td className={cell}>{o.close}</td>
                    <td className={cell}>402.000</td>
                    <td className={cell}>0.00</td>
                    <td className={cell}>{o.profit}</td>
                  </tr>
                ))}
              </tbody>
            </table>
          </div>
          <div className="flex w-[18px] shrink-0 flex-col bg-linear-to-r from-[#e0ecfa] to-[#f8fbff]">
            <button aria-label="Вверх" className="flex h-[18px] items-center justify-center rounded-[2px] border border-[#7f9cc4] bg-[#cfe0f4]">
              <svg width="10" height="6" viewBox="0 0 10 6" fill="none"><path d="M1 5l4-4 4 4" stroke="#4d6185" strokeWidth="2" /></svg>
            </button>
            <div className="mt-px flex h-4 items-center justify-center rounded-[2px] border border-[#7f9cc4] bg-[#dce9f8]">
              <svg width="7" height="8" viewBox="0 0 7 8"><path d="M0 .5h7M0 2.500h7M0 4.500h7M0 6.500h7" stroke="#6d85ac" /></svg>
            </div>
            <button aria-label="Вниз" className="mt-auto flex h-[18px] items-center justify-center rounded-[2px] border border-[#7f9cc4] bg-[#cfe0f4]">
              <svg width="10" height="6" viewBox="0 0 10 6" fill="none"><path d="M1 1l4 4 4-4" stroke="#4d6185" strokeWidth="2" /></svg>
            </button>
          </div>
        </div>
        <div className="flex h-[20px]">
          {terminalTabs.map((t) =>
            t.active ? (
              <button key={t.label} className={`${t.width} h-[18px] shrink-0 border border-t-0 border-black bg-white leading-[17px] whitespace-nowrap`}>{t.label}</button>
            ) : (
              <div key={t.label} className={`${t.width} shrink-0 border-t border-black pt-[2px]`}>
                <button className="h-3 w-full border-r border-[#8f8d92] text-center leading-3 whitespace-nowrap text-[#8f8d92]">{t.label}</button>
              </div>
            ),
          )}
          <div className="flex-1 border-t border-black" />
        </div>
      </div>
    </section>
  );
}

function StatusBar() {
  const cell = 'h-4 shrink-0 border-l border-[#a5a3a8] pl-1 whitespace-nowrap';
  return (
    <footer className="flex h-[18px] shrink-0 items-start overflow-hidden border-t border-b-2 border-t-[#a5a3a8] border-b-[#3f6f9c] pt-[4px] text-[11px] leading-4">
      <span className="w-[456px] shrink-0 pl-px">Для справки, нажмите F1</span>
      <span className={`${cell} w-[133px]`}>Default</span>
      <span className={`${cell} w-[118px]`}>2014.11.06 00:00</span>
      <span className={`${cell} w-[84px]`}>O: 337.089</span>
      <span className={`${cell} w-[84px]`}>H: 337.089</span>
      <span className={`${cell} w-[80px]`}>L: 333.000</span>
      <span className={`${cell} w-[83px]`}>C: 335.740</span>
      <span className={`${cell} w-[80px]`}>V: 788</span>
      <span className={`${cell} flex flex-1`}>
        <svg width="24" height="11" viewBox="0 0 24 11" className="mr-[26px] ml-px" aria-hidden>
          <path d="M1 0v10M4 0v9M7 0v8M10 0v6M13 0v5M16 0v4M19 0v3M22 0v2" stroke="#5c7a10" strokeWidth="2" />
          <path d="M7 9v2M10 8v3M13 6v5M16 5v6M19 4v7M22 3v8" stroke="#12405c" strokeWidth="2" />
        </svg>
        553/1 kb
      </span>
    </footer>
  );
}

export default function App() {
  return (
    <div className="h-screen bg-white pr-2 pb-2 font-['DejaVu_Sans_Condensed','Noto_Sans',sans-serif] text-black">
      <div className="flex h-full flex-col overflow-hidden">
        <TitleBar />
        <div className="flex min-h-0 flex-1 flex-col border-l-4 border-[#3f6fc8] bg-[#ebe9ed]">
          <MenuBar />
          <Toolbars />
          <div className="flex min-h-0 flex-1">
            <aside className="flex w-[187px] shrink-0 flex-col">
              <MarketWatch />
              <Navigator />
            </aside>
            <ChartArea />
          </div>
          <Terminal />
          <StatusBar />
        </div>
      </div>
    </div>
  );
}
